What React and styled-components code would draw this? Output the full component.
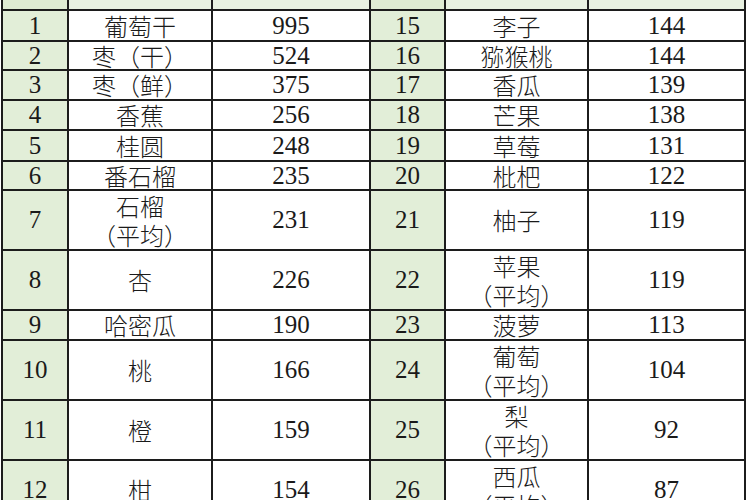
import React from "react";
import styled, { createGlobalStyle } from "styled-components";

const GlobalStyle = createGlobalStyle`
  html, body {
    margin: 0;
    padding: 0;
    background: #ffffff;
    overflow: hidden;
  }
  body {
    width: 750px;
    height: 500px;
  }
`;

// 数据：编号、名称（可两行）、数值
const rows = [
    { h: 29, left: [1, ["葡萄干"], 995], right: [15, ["李子"], 144] },
    { h: 27, left: [2, ["枣（干）"], 524], right: [16, ["猕猴桃"], 144] },
    { h: 28, left: [3, ["枣（鲜）"], 375], right: [17, ["香瓜"], 139] },
    { h: 28, left: [4, ["香蕉"], 256], right: [18, ["芒果"], 138] },
    { h: 29, left: [5, ["桂圆"], 248], right: [19, ["草莓"], 131] },
    { h: 27, left: [6, ["番石榴"], 235], right: [20, ["枇杷"], 122] },
    { h: 58, left: [7, ["石榴", "（平均）"], 231], right: [21, ["柚子"], 119] },
    { h: 58, left: [8, ["杏"], 226], right: [22, ["苹果", "（平均）"], 119] },
    { h: 28, left: [9, ["哈密瓜"], 190], right: [23, ["菠萝"], 113] },
    { h: 58, left: [10, ["桃"], 166], right: [24, ["葡萄", "（平均）"], 104] },
    { h: 58, left: [11, ["橙"], 159], right: [25, ["梨", "（平均）"], 92] },
    { h: 58, left: [12, ["柑"], 154], right: [26, ["西瓜", "（平均）"], 87] },
];

const Page = styled.div`
  width: 750px;
  height: 500px;
  overflow: hidden;
  padding-left: 1px;
  box-sizing: border-box;
`;

const Grid = styled.div`
  display: grid;
  width: 745px;
  grid-template-columns: 64px 142px 156px 73px 141px 155px;
  grid-template-rows: ${(p) => p.$rows};
  gap: 2px;
  padding: 0 2px 2px 2px;
  box-sizing: border-box;
  background: #1c1c1c;
`;

const Cell = styled.div`
  display: flex;
  flex-direction: column;
  align-items: center;
  justify-content: center;
  background: ${(p) => (p.$green ? "#e2eed8" : "#ffffff")};
  color: #1a1a1a;
  overflow: hidden;
`;

const HeadCell = styled.div`
  background: ${(p) => (p.$green ? "#dfecd3" : "#e8f1e1")};
`;

const Num = styled.span`
  display: block;
  font-family: "Liberation Serif", "Times New Roman", serif;
  font-size: 25px;
  line-height: 26px;
  height: 26px;
`;

const Name = styled.span`
  display: block;
  font-family: "Noto Sans CJK SC", "Noto Sans", sans-serif;
  font-weight: 300;
  font-size: 24px;
  line-height: ${(p) => (p.$stacked ? "29px" : "26px")};
  height: ${(p) => (p.$stacked ? "29px" : "26px")};
  white-space: nowrap;
`;

function Group({ data }) {
    const [no, name, value] = data;
    return (
        <>
            <Cell $green>
                <Num>{no}</Num>
            </Cell>
            <Cell>
                {name.map((line) => (
                    <Name key={line} $stacked={name.length > 1}>
                        {line}
                    </Name>
                ))}
            </Cell>
            <Cell>
                <Num>{value}</Num>
            </Cell>
        </>
    );
}

export default function App() {
    const template = ["9px", ...rows.map((r) => r.h + "px")].join(" ");
    return (
        <>
            <GlobalStyle />
            <Page>
                <Grid $rows={template}>
                    <HeadCell $green />
                    <HeadCell />
                    <HeadCell />
                    <HeadCell $green />
                    <HeadCell />
                    <HeadCell />
                    {rows.map((r) => (
                        <React.Fragment key={r.left[0]}>
                            <Group data={r.left} />
                            <Group data={r.right} />
                        </React.Fragment>
                    ))}
                </Grid>
            </Page>
        </>
    );
}
